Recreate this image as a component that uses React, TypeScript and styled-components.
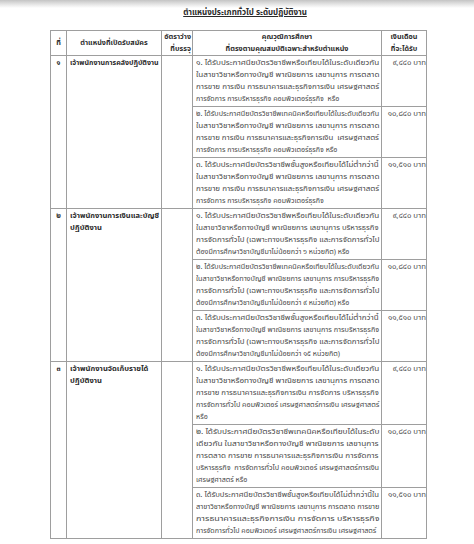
import React, { useLayoutEffect, useRef, useState } from "react";
import styled, { createGlobalStyle } from "styled-components";

const GlobalStyle = createGlobalStyle`
  html, body {
    margin: 0;
    padding: 0;
    background: #ffffff;
  }
  body {
    font-family: "Noto Sans Thai", "Loma", "Garuda", "Tlwg Typo", "Noto Sans", sans-serif;
    color: #474747;
  }
`;

type Qual = { lines: string[]; salary: string };
type Job = { no: string; name: string[]; quals: Qual[] };

const jobs: Job[] = [
  {
    no: "๑",
    name: ["เจ้าพนักงานการคลังปฏิบัติงาน"],
    quals: [
      {
        salary: "๙,๔๔๐ บาท",
        lines: [
          "๑. ได้รับประกาศนียบัตรวิชาชีพหรือเทียบได้ในระดับเดียวกัน",
          "ในสาขาวิชาหรือทางบัญชี พาณิชยการ เลขานุการ การตลาด",
          "การขาย การเงิน การธนาคารและธุรกิจการเงิน เศรษฐศาสตร์",
          "การจัดการ การบริหารธุรกิจ คอมพิวเตอร์ธุรกิจ  หรือ",
        ],
      },
      {
        salary: "๑๐,๘๔๐ บาท",
        lines: [
          "๒. ได้รับประกาศนียบัตรวิชาชีพเทคนิคหรือเทียบได้ในระดับเดียวกัน",
          "ในสาขาวิชาหรือทางบัญชี พาณิชยการ เลขานุการ การตลาด",
          "การขาย การเงิน การธนาคารและธุรกิจการเงิน  เศรษฐศาสตร์",
          "การจัดการ การบริหารธุรกิจ คอมพิวเตอร์ธุรกิจ หรือ",
        ],
      },
      {
        salary: "๑๑,๕๑๐ บาท",
        lines: [
          "๓. ได้รับประกาศนียบัตรวิชาชีพชั้นสูงหรือเทียบได้ไม่ต่ำกว่านี้",
          "ในสาขาวิชาหรือทางบัญชี พาณิชยการ เลขานุการ การตลาด",
          "การขาย การเงิน การธนาคารและธุรกิจการเงิน เศรษฐศาสตร์",
          "การจัดการ การบริหารธุรกิจ คอมพิวเตอร์ธุรกิจ",
        ],
      },
    ],
  },
  {
    no: "๒",
    name: ["เจ้าพนักงานการเงินและบัญชี", "ปฏิบัติงาน"],
    quals: [
      {
        salary: "๙,๔๔๐ บาท",
        lines: [
          "๑. ได้รับประกาศนียบัตรวิชาชีพหรือเทียบได้ในระดับเดียวกัน",
          "ในสาขาวิชาหรือทางบัญชี พาณิชยการ เลขานุการ บริหารธุรกิจ",
          "การจัดการทั่วไป (เฉพาะทางบริหารธุรกิจ และการจัดการทั่วไป",
          "ต้องมีการศึกษาวิชาบัญชีมาไม่น้อยกว่า ๖ หน่วยกิต) หรือ",
        ],
      },
      {
        salary: "๑๐,๘๔๐ บาท",
        lines: [
          "๒. ได้รับประกาศนียบัตรวิชาชีพเทคนิคหรือเทียบได้ในระดับเดียวกัน",
          "ในสาขาวิชาหรือทางบัญชี พาณิชยการ เลขานุการ การบริหารธุรกิจ",
          "การจัดการทั่วไป (เฉพาะทางบริหารธุรกิจ และการจัดการทั่วไป",
          "ต้องมีการศึกษาวิชาบัญชีมาไม่น้อยกว่า ๙ หน่วยกิต) หรือ",
        ],
      },
      {
        salary: "๑๑,๕๑๐ บาท",
        lines: [
          "๓. ได้รับประกาศนียบัตรวิชาชีพชั้นสูงหรือเทียบได้ไม่ต่ำกว่านี้",
          "ในสาขาวิชาหรือทางบัญชี พาณิชยการ เลขานุการ การบริหารธุรกิจ",
          "การจัดการทั่วไป (เฉพาะทางบริหารธุรกิจ และการจัดการทั่วไป",
          "ต้องมีการศึกษาวิชาบัญชีมาไม่น้อยกว่า ๑๕ หน่วยกิต)",
        ],
      },
    ],
  },
  {
    no: "๓",
    name: ["เจ้าพนักงานจัดเก็บรายได้", "ปฏิบัติงาน"],
    quals: [
      {
        salary: "๙,๔๔๐ บาท",
        lines: [
          "๑. ได้รับประกาศนียบัตรวิชาชีพหรือเทียบได้ในระดับเดียวกัน",
          "ในสาขาวิชาหรือทางบัญชี พาณิชยการ เลขานุการ การตลาด",
          "การขาย การธนาคารและธุรกิจการเงิน การจัดการ บริหารธุรกิจ",
          "การจัดการทั่วไป คอมพิวเตอร์ เศรษฐศาสตร์การเงิน เศรษฐศาสตร์",
          "หรือ",
        ],
      },
      {
        salary: "๑๐,๘๔๐ บาท",
        lines: [
          "๒. ได้รับประกาศนียบัตรวิชาชีพเทคนิคหรือเทียบได้ในระดับ",
          "เดียวกัน ในสาขาวิชาหรือทางบัญชี พาณิชยการ เลขานุการ",
          "การตลาด การขาย การธนาคารและธุรกิจการเงิน การจัดการ",
          "บริหารธุรกิจ  การจัดการทั่วไป คอมพิวเตอร์ เศรษฐศาสตร์การเงิน",
          "เศรษฐศาสตร์ หรือ",
        ],
      },
      {
        salary: "๑๑,๕๑๐ บาท",
        lines: [
          "๓. ได้รับประกาศนียบัตรวิชาชีพชั้นสูงหรือเทียบได้ไม่ต่ำกว่านี้ใน",
          "สาขาวิชาหรือทางบัญชี พาณิชยการ เลขานุการ การตลาด การขาย",
          "การธนาคารและธุรกิจการเงิน การจัดการ บริหารธุรกิจ",
          "การจัดการทั่วไป คอมพิวเตอร์ เศรษฐศาสตร์การเงิน เศรษฐศาสตร์",
        ],
      },
    ],
  },
];

// stretches a full line to the cell width, the way the scanned page is justified;
// a last line is only squeezed when it would overflow
const FitLine = ({ text, last }: { text: string; last: boolean }) => {
  const ref = useRef<HTMLSpanElement>(null);
  const [scale, setScale] = useState(1);

  useLayoutEffect(() => {
    const el = ref.current;
    if (!el || !el.parentElement) return;
    const w = el.offsetWidth;
    const box = el.parentElement.clientWidth;
    if (w > 0 && (!last || w > box)) setScale(box / w);
  }, [text, last]);

  return (
    <Line>
      <LineText ref={ref} style={{ transform: `scaleX(${scale})` }}>
        {text}
      </LineText>
    </Line>
  );
};

const App = () => {
  return (
    <Page>
      <GlobalStyle />
      <TopShade />
      <Title>ตำแหน่งประเภททั่วไป ระดับปฏิบัติงาน</Title>
      <Table>
        <colgroup>
          <col style={{ width: 16 }} />
          <col style={{ width: 95 }} />
          <col style={{ width: 31 }} />
          <col style={{ width: 189 }} />
          <col style={{ width: 45 }} />
        </colgroup>
        <thead>
          <tr>
            <Th>ที่</Th>
            <Th>ตำแหน่งที่เปิดรับสมัคร</Th>
            <Th align="right">
              อัตราว่าง
              <br />
              ที่บรรจุ
            </Th>
            <Th>
              คุณวุฒิการศึกษา
              <br />
              ที่ตรงตามคุณสมบัติเฉพาะสำหรับตำแหน่ง
            </Th>
            <Th>
              เงินเดือน
              <br />
              ที่จะได้รับ
            </Th>
          </tr>
        </thead>
        <tbody>
          {jobs.map((job) =>
            job.quals.map((q, i) => (
              <tr key={job.no + i}>
                {i === 0 && (
                  <>
                    <NoCell rowSpan={job.quals.length}>{job.no}</NoCell>
                    <NameCell rowSpan={job.quals.length}>
                      {job.name.map((n) => (
                        <FitLine key={n} text={n} last />
                      ))}
                    </NameCell>
                    <EmptyCell rowSpan={job.quals.length} />
                  </>
                )}
                <QualCell>
                  {q.lines.map((l, j) => (
                    <FitLine key={j} text={l} last={j === q.lines.length - 1} />
                  ))}
                </QualCell>
                <SalaryCell>{q.salary}</SalaryCell>
              </tr>
            ))
          )}
        </tbody>
      </Table>
    </Page>
  );
};

export default App;

const Page = styled.div`
  width: 474px;
  height: 544px;
  overflow: hidden;
  background: #ffffff;
`;

const TopShade = styled.div`
  height: 8px;
  background: linear-gradient(#c4c4c4, #e6e6e6 55%, #ffffff);
`;

const Title = styled.div`
  text-align: center;
  font-size: 8px;
  line-height: 10px;
  font-weight: 700;
  color: #2a2a2a;
  text-decoration: underline;
  padding-left: 16px;
  margin-bottom: 12px;
`;

const Table = styled.table`
  margin-left: 50px;
  width: 377px;
  table-layout: fixed;
  border-collapse: collapse;
  font-size: 7.1px;
  line-height: 12px;
  border: 1px solid #9e9e9e;
`;

const Th = styled.th<{ align?: string }>`
  border: 1px solid #9e9e9e;
  font-weight: 700;
  color: #2e2e2e;
  font-size: 7.2px;
  line-height: 12px;
  padding: 0 1px;
  text-align: ${(p) => p.align || "center"};
  vertical-align: middle;
  white-space: nowrap;
  overflow: hidden;
`;

const NoCell = styled.td`
  border: 1px solid #9e9e9e;
  text-align: center;
  vertical-align: top;
  font-weight: 700;
  font-size: 7.2px;
  padding-top: 1px;
  color: #2e2e2e;
`;

const NameCell = styled.td`
  border: 1px solid #9e9e9e;
  vertical-align: top;
  font-weight: 700;
  font-size: 7.6px;
  color: #2a2a2a;
  padding: 1px 2px 1px 3px;
  white-space: nowrap;
  overflow: hidden;
`;

const EmptyCell = styled.td`
  border: 1px solid #9e9e9e;
`;

const QualCell = styled.td`
  border: 1px solid #9e9e9e;
  vertical-align: top;
  padding: 1px 2px 1px 3px;
`;

const Line = styled.div`
  height: 12px;
  white-space: nowrap;
`;

const LineText = styled.span`
  display: inline-block;
  white-space: pre;
  transform-origin: left center;
`;

const SalaryCell = styled.td`
  border: 1px solid #9e9e9e;
  vertical-align: top;
  text-align: right;
  font-size: 7.8px;
  padding: 1px 0 0 0;
  white-space: nowrap;
  overflow: hidden;
  color: #505050;
`;
